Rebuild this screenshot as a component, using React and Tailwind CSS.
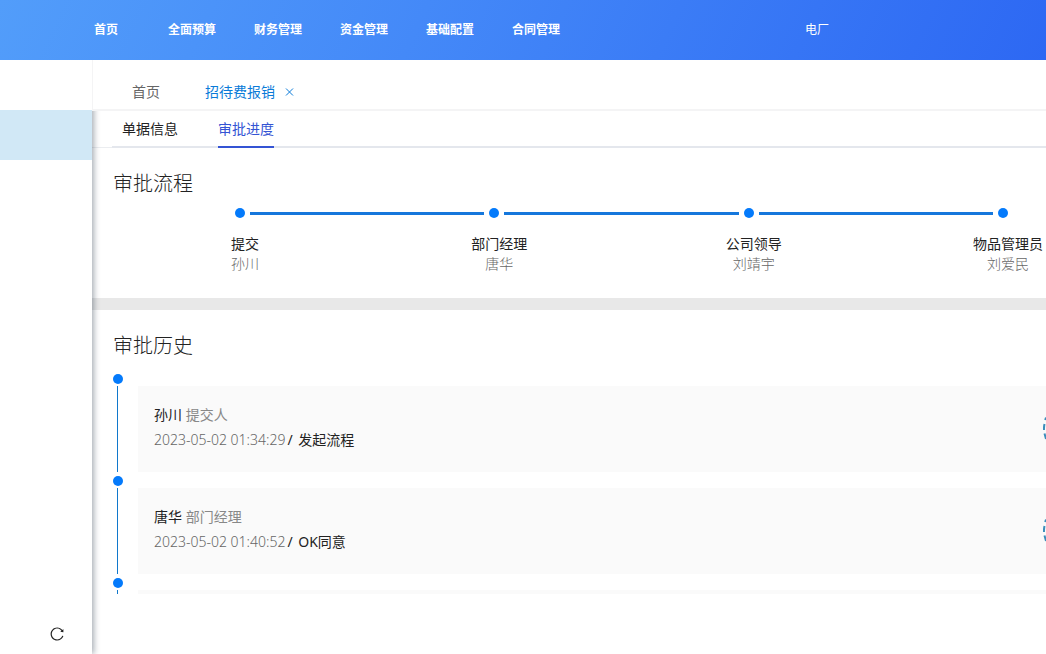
import React from "react";
import { AiOutlineReload } from "react-icons/ai";

const navItems = ["全面预算", "财务管理", "资金管理", "基础配置", "合同管理"];

const steps = [
  { role: "提交", name: "孙川" },
  { role: "部门经理", name: "唐华" },
  { role: "公司领导", name: "刘靖宇" },
  { role: "物品管理员", name: "刘爱民" },
];

const history = [
  { name: "孙川", role: "提交人", time: "2023-05-02 01:34:29", note: "发起流程" },
  { name: "唐华", role: "部门经理", time: "2023-05-02 01:40:52", note: "OK同意" },
];

function Header() {
  return (
    <header className="relative z-30 flex h-[60px] shrink-0 items-center justify-between bg-[linear-gradient(115deg,#529dfa,#4489f8_40%,#2d68f3)] pr-[217px] pl-[94px] text-xs text-white">
      <nav className="flex gap-[38px] font-bold whitespace-nowrap">
        <a href="#home" className="w-9">首页</a>
        {navItems.map((item) => (
          <a key={item} href={"#" + item}>{item}</a>
        ))}
      </nav>
      <span>电厂</span>
    </header>
  );
}

function Sidebar() {
  return (
    <aside className="relative z-10 flex w-[92px] shrink-0 flex-col justify-between bg-white pt-[50px] pb-3 shadow-[2px_0_6px_rgba(0,21,41,0.35)]">
      <div className="h-[50px] bg-[#d1e8f6]" />
      <button type="button" aria-label="刷新" className="mr-[27px] self-end text-[#222]">
        <AiOutlineReload className="size-4" />
      </button>
    </aside>
  );
}

function PageTabs() {
  return (
    <div className="relative z-20 flex h-[51px] shrink-0 items-center gap-[45px] border-b-2 border-l border-[#f4f4f5] bg-white pt-3.5 pl-[39px] text-sm whitespace-nowrap">
      <a href="#home" className="text-[#666]">首页</a>
      <div className="flex items-center gap-2.5 text-[#0a7bd8]">
        <a href="#expense">招待费报销</a>
        <button type="button" aria-label="关闭">
          <svg viewBox="0 0 9 9" className="size-[9px]" fill="none" stroke="currentColor">
            <path d="M1 1.500 8 8.500M8 1.500 1 8.500" />
          </svg>
        </button>
      </div>
    </div>
  );
}

function DetailTabs() {
  return (
    <div className="shrink-0 border-b border-[#ebedf0] pl-5">
      <div role="tablist" className="-mb-px flex h-[37px] gap-10 border-b-2 border-[#e4e7ed] pl-2.5 text-sm whitespace-nowrap">
        <button type="button" role="tab" aria-selected="false" className="-mb-0.5 border-b-2 border-transparent text-[#222]">单据信息</button>
        <button type="button" role="tab" aria-selected="true" className="-mb-0.5 border-b-2 border-[#3454d4] text-[#3454d4]">审批进度</button>
      </div>
    </div>
  );
}

function Steps() {
  return (
    <ol className="flex pr-7 pl-[143px]">
      {steps.map((step, index) => {
        const last = index === steps.length - 1;
        return (
          <li key={step.role} className={last ? "w-5" : "flex-1"}>
            <div className="flex h-2.5 items-center">
              <span className="size-2.5 shrink-0 rounded-full bg-[#047afb]" />
              {!last && <span className="mx-[5px] h-[3px] flex-1 bg-[#1577dc]" />}
            </div>
            <div className="mt-4 flex w-5 flex-col items-center text-sm whitespace-nowrap">
              <span className="text-[#222]">{step.role}</span>
              <span className="font-light text-[#666]">{step.name}</span>
            </div>
          </li>
        );
      })}
    </ol>
  );
}

function Stamp() {
  return (
    <svg viewBox="0 0 3 26" className="h-[26px] w-[3px] self-center" fill="none" stroke="#3b8dbb" strokeWidth="2" aria-hidden="true">
      <path d="M3 1.500 2.200 4M1.500 8Q.8 11 1 14M1.500 17.500 3 23" />
    </svg>
  );
}

function TimelineItem({ children }) {
  return (
    <li className="flex gap-[15px]">
      <div className="flex w-2.5 shrink-0 flex-col">
        <span className="size-2.5 shrink-0 rounded-full bg-[#047afb]" />
        <span className="mt-0.5 mb-1 ml-1 w-px flex-1 bg-[#1078cc]" />
      </div>
      <div className="mt-3 mb-1 flex h-[86px] flex-1 justify-between bg-[#fafafa] pl-4">
        {children}
      </div>
    </li>
  );
}

function History() {
  return (
    <ol className="mt-3.5 pl-[21px]">
      {history.map((item) => (
        <TimelineItem key={item.time}>
          <div className="pt-4 text-sm leading-[25px] whitespace-nowrap">
            <p className="text-[#222]">
              {item.name} <span className="text-[#888]">{item.role}</span>
            </p>
            <p className="text-[#222]">
              <time className="font-light text-[#666]">{item.time}</time>
              <span className="mx-0.5">/</span> {item.note}
            </p>
          </div>
          <Stamp />
        </TimelineItem>
      ))}
      <TimelineItem />
    </ol>
  );
}

export default function App() {
  return (
    <div className="flex h-screen flex-col overflow-hidden bg-white font-['Noto_Sans','Noto_Sans_CJK_SC',sans-serif]">
      <Header />
      <div className="flex min-h-0 flex-1">
        <Sidebar />
        <main className="flex min-w-0 flex-1 flex-col pb-[60px]">
          <PageTabs />
          <DetailTabs />
          <div className="min-h-0 flex-1 overflow-hidden">
            <section className="border-b-12 border-[#e8e8e8] pt-[22px] pb-6">
              <h2 className="mb-2.5 pl-[21px] text-xl font-light text-[#222]">审批流程</h2>
              <Steps />
            </section>
            <section className="pt-[22px]">
              <h2 className="pl-[21px] text-xl font-light text-[#222]">审批历史</h2>
              <History />
            </section>
          </div>
        </main>
      </div>
    </div>
  );
}
